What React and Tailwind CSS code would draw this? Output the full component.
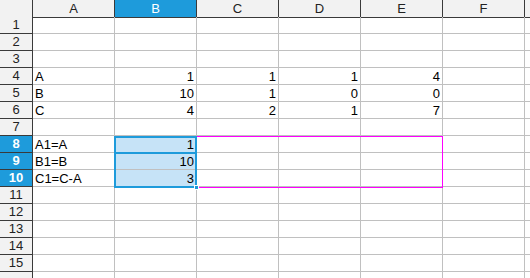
import React from "react";

const cols = ["A", "B", "C", "D", "E", "F"];

const data = {
  4: { A: "A", B: "1", C: "1", D: "1", E: "4" },
  5: { A: "B", B: "10", C: "1", D: "0", E: "0" },
  6: { A: "C", B: "4", C: "2", D: "1", E: "7" },
  8: { A: "A1=A", B: "1" },
  9: { A: "B1=B", B: "10" },
  10: { A: "C1=C-A", B: "3" },
};

const isNum = (v) => /^-?\d+(\.\d+)?$/.test(v);

const App = () => {
  const rows = Array.from({ length: 16 }, (_, i) => i + 1);

  return (
    <div
      className="relative w-[530px] h-[278px] overflow-hidden bg-white text-[13px] text-black"
      style={{ fontFamily: '"Liberation Sans", Arial, sans-serif' }}
    >
      <div className="grid grid-cols-[33px_repeat(6,82px)_1fr] auto-rows-[17px]">
        {/* column header */}
        <div className="h-[18px] bg-[#f2f2f2] border-r border-b border-[#3a3a3a]" />
        {cols.map((c) => (
          <div
            key={c}
            className={`h-[18px] flex items-center justify-center border-r border-b border-[#3a3a3a] ${
              c === "B" ? "bg-[#1e9bdb] text-white" : "bg-[#f2f2f2] text-[#222]"
            }`}
          >
            {c}
          </div>
        ))}
        <div className="h-[18px] bg-[#f2f2f2] border-b border-[#3a3a3a]" />

        {rows.map((r) => {
          const sel = r >= 8 && r <= 10;
          return (
            <React.Fragment key={r}>
              <div
                className={`flex items-center justify-center border-r border-b border-[#3a3a3a] ${
                  sel ? "bg-[#1e9bdb] text-white font-bold" : "bg-[#f2f2f2] text-[#222]"
                }`}
              >
                {r < 16 ? r : ""}
              </div>
              {cols.map((c) => {
                const v = data[r]?.[c] ?? "";
                return (
                  <div
                    key={c}
                    className={`flex items-center px-[2px] leading-none border-r border-b border-[#c0c0c0] ${
                      isNum(v) ? "justify-end" : "justify-start"
                    } ${sel && c === "B" ? "bg-[#c6e3f7]" : ""}`}
                  >
                    {v}
                  </div>
                );
              })}
              <div className="border-b border-[#c0c0c0]" />
            </React.Fragment>
          );
        })}
      </div>

      {/* reference range highlight */}
      <div className="absolute left-[114px] top-[136px] w-[329px] h-[52px] border border-[#ff00ff] pointer-events-none" />
      {/* selected range */}
      <div className="absolute left-[114px] top-[136px] w-[83px] h-[52px] border-2 border-[#1e9bdb] pointer-events-none" />
      {/* cell cursor */}
      <div className="absolute left-[114px] top-[136px] w-[83px] h-[18px] border-2 border-[#1e9bdb] pointer-events-none" />
      {/* fill handle */}
      <div className="absolute left-[194px] top-[185px] w-[5px] h-[5px] bg-[#1e9bdb] border border-white" />
    </div>
  );
};

export default App;
